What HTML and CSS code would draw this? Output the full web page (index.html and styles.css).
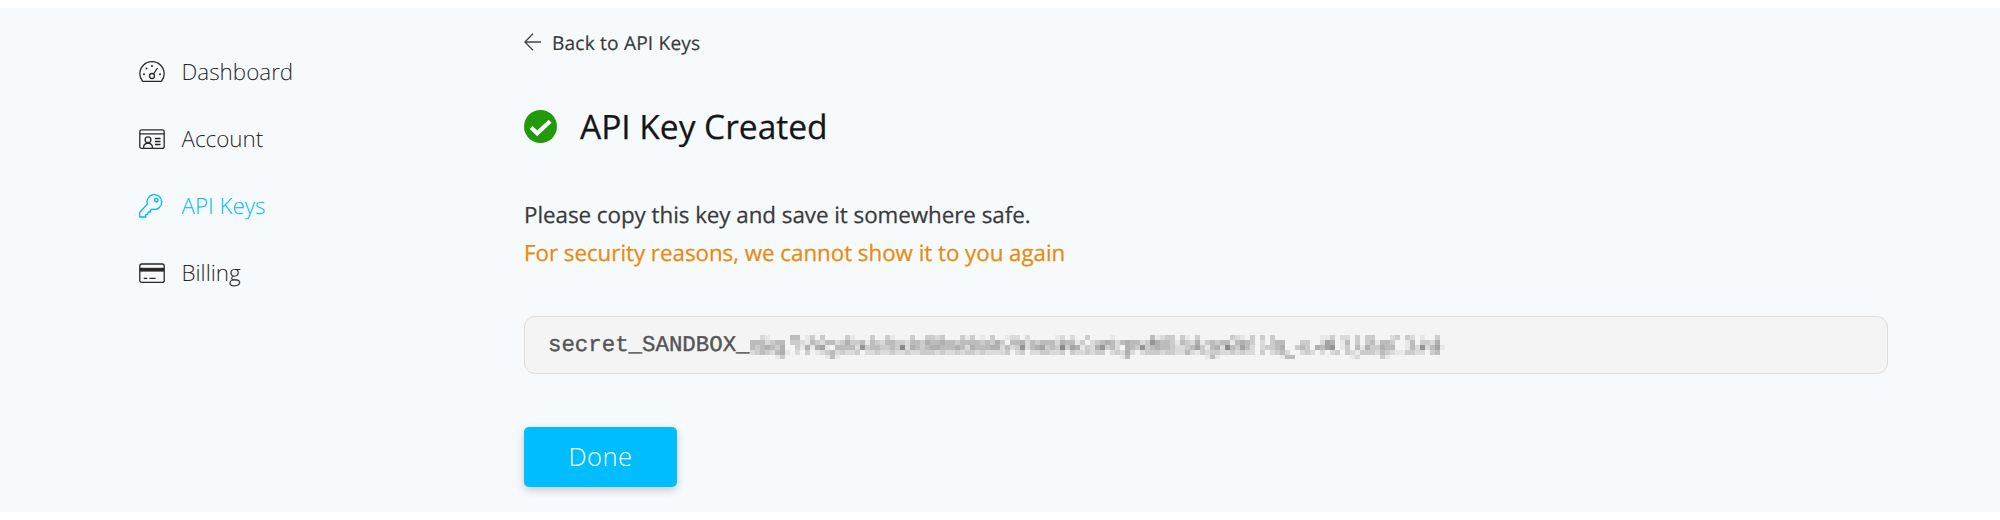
FILE: index.html
```
<!DOCTYPE html>
<html lang="en">
<head>
<meta charset="utf-8">
<title>API Key Created</title>
<link rel="stylesheet" href="styles.css">
</head>
<body>
<div class="page">
  <nav class="sidebar">
    <a class="nav-item">
      <svg class="nav-icon" viewBox="0 0 26 26"><path d="M3.600 22.300C1.700 20 .8 17.600 .8 14.800a12.200 12.200 0 0 1 24.400 0c0 2.800-.9 5.200-2.800 7.500z"/><circle cx="13" cy="17" r="2.500"/><path d="M14.500 15l4-6"/><g class="dots"><circle cx="5" cy="15.300" r="1"/><circle cx="7.500" cy="9.500" r="1"/><circle cx="13" cy="7" r="1"/><circle cx="21" cy="15.300" r="1"/></g></svg>
      <span>Dashboard</span>
    </a>
    <a class="nav-item">
      <svg class="nav-icon" viewBox="0 0 26 26"><rect x=".8" y="3.800" width="24.400" height="18.600" rx="2"/><path d="M1 7.800h24M4.700 22v-1.500c0-2 1.600-2.800 3-3.200h2.600c1.400.4 3 1.200 3 3.200V22M16 12.500h5.500M16 15.500h5.500M16 18.500h5.500"/><circle cx="9" cy="13.700" r="2.900"/></svg>
      <span>Account</span>
    </a>
    <a class="nav-item active">
      <svg class="nav-icon" viewBox="0 0 26 26"><path d="M8.300 11.300A7.400 7.400 0 1 1 14.600 16.400L12.600 16.100 11.400 17.600V19H9.600L8.600 20.100V21.700H6.700V24H.8V19.300z"/><circle cx="17.300" cy="7.200" r="1.800"/></svg>
      <span>API Keys</span>
    </a>
    <a class="nav-item">
      <svg class="nav-icon" viewBox="0 0 26 26"><rect x=".8" y="4" width="24.400" height="18.400" rx="2"/><path class="stripe" d="M1 9.700h24"/><path d="M4.800 18.300h3.400M10.400 18.300h6.200"/></svg>
      <span>Billing</span>
    </a>
  </nav>
  <main class="content">
    <a class="back"><svg class="back-icon" viewBox="0 0 18 18"><path d="M17 9H1M9 .8L.9 9 9 17.200"/></svg><span>Back to API Keys</span></a>
    <h1 class="title"><svg class="check" viewBox="0 0 32 32"><circle cx="16" cy="16" r="16"/><path d="M7 17l5.800 5.600L25.300 11"/></svg><span>API Key Created</span></h1>
    <p class="message">Please copy this key and save it somewhere safe.</p>
    <p class="message warning">For security reasons, we cannot show it to you again</p>
    <div class="key-box"><code>secret_SANDBOX_</code><svg class="mask" width="695" height="24" shape-rendering="crispEdges"></svg></div>
    <button class="done">Done</button>
  </main>
</div>
<script src="mask.js"></script>
</body>
</html>
```
FILE: styles.css
```
body { margin: 0; background: #fff; font-family: "Open Sans", sans-serif; color: #3a3a3a; text-rendering: geometricPrecision; }
.page { box-sizing: border-box; height: 504px; margin-top: 8px; background: #f6fafd; display: flex; }
.sidebar { box-sizing: border-box; width: 524px; flex: none; padding: 30px 0 0 139px; }
.nav-item { display: flex; align-items: center; gap: 16.500px; height: 67px; font-size: 22.400px; font-weight: 300; color: #282828; }
.nav-icon { width: 26px; height: 26px; fill: none; stroke: currentColor; stroke-width: 1.300; }
.nav-icon .dots { fill: currentColor; stroke: none; }
.nav-icon .stripe { stroke-width: 3.800; }
.nav-item.active { color: #00b9fa; }
.content { width: 1364px; display: flex; flex-direction: column; align-items: flex-start; }
.back { display: flex; align-items: center; gap: 10px; height: 30px; margin-top: 19px; font-size: 19.200px; letter-spacing: .15px; -webkit-text-stroke: .2px; }
.back-icon { width: 18px; height: 18px; fill: none; stroke: #444; stroke-width: 1.300; }
.title { display: flex; align-items: center; gap: 23px; height: 46px; margin: 46px 0 0; font-size: 33.600px; font-weight: 400; letter-spacing: -.05px; color: #161616; -webkit-text-stroke: .25px; }
.check { width: 33px; height: 33px; fill: #229a0c; -webkit-text-stroke: 0; }
.check path { fill: none; stroke: #fff; stroke-width: 4; }
.message { margin: 0; font-size: 22.400px; line-height: 38px; letter-spacing: -.05px; -webkit-text-stroke: .25px; }
.title + .message { margin-top: 47px; }
.warning { color: #e98b0c; }
.key-box { box-sizing: border-box; width: 100%; height: 58px; margin-top: 44px; padding-left: 23px; display: flex; align-items: center; background: #f4f4f4; border: 1px solid #dcdcdc; border-radius: 11px; }
.key-box code { font: 22.400px "Courier New", "Liberation Mono", monospace; color: #555; -webkit-text-stroke: .4px; }
.mask { flex: none; margin-top: 4px; }
.done { width: 153px; height: 60px; margin-top: 53px; padding: 0 0 1px; border: 0; border-radius: 5px; background: #00bdff; color: #fff; font: 300 25.600px "Open Sans", sans-serif; letter-spacing: .5px; box-shadow: 0 3px 9px rgba(0,0,0,.2); }
```
FILE: mask.js
```
// Mosaic over the hidden part of the key: one digit per block, 0 = blank, 8 = darkest.
const rows = [
  "0021000044013030000310003003100030033230003130103001220200000120200300001000000041233031030000003210303030000000001130220303300023032010030",
  "4442344033214324423533414324433244354454434444343530445243444254413023454245442375443143251343441454302034400033002650140303414430014033250",
  "4345435003151561044442734433438254345544454254445524237245634383651325734205437345443223463145284364202334500343054670130415335440014272461",
  "2343245102030123423223022322322322333232232332322223023022332230322323302325202333233224213233223232203023420023202023032133324321133220340",
  "0000013000000001410000000000000000000000000000000000000000000000000000000014000000000000000141000000000000144000000000001200003100000000000"
];
const shades = ["#f1f1f1", "#e8e8e8", "#dadada", "#cccccc", "#bcbcbc", "#b0b0b0", "#a3a3a3", "#959595", "#8a8a8a"];
const mask = document.querySelector(".mask");
rows.forEach((row, y) => [...row].slice(0, 139).forEach((level, x) => {
  if (level === "0") return;
  const block = document.createElementNS("http://www.w3.org/2000/svg", "rect");
  block.setAttribute("x", x * 5);
  block.setAttribute("y", y * 5);
  block.setAttribute("width", 5);
  block.setAttribute("height", y === 4 ? 4 : 5);
  block.setAttribute("fill", shades[level]);
  mask.append(block);
}));
```
